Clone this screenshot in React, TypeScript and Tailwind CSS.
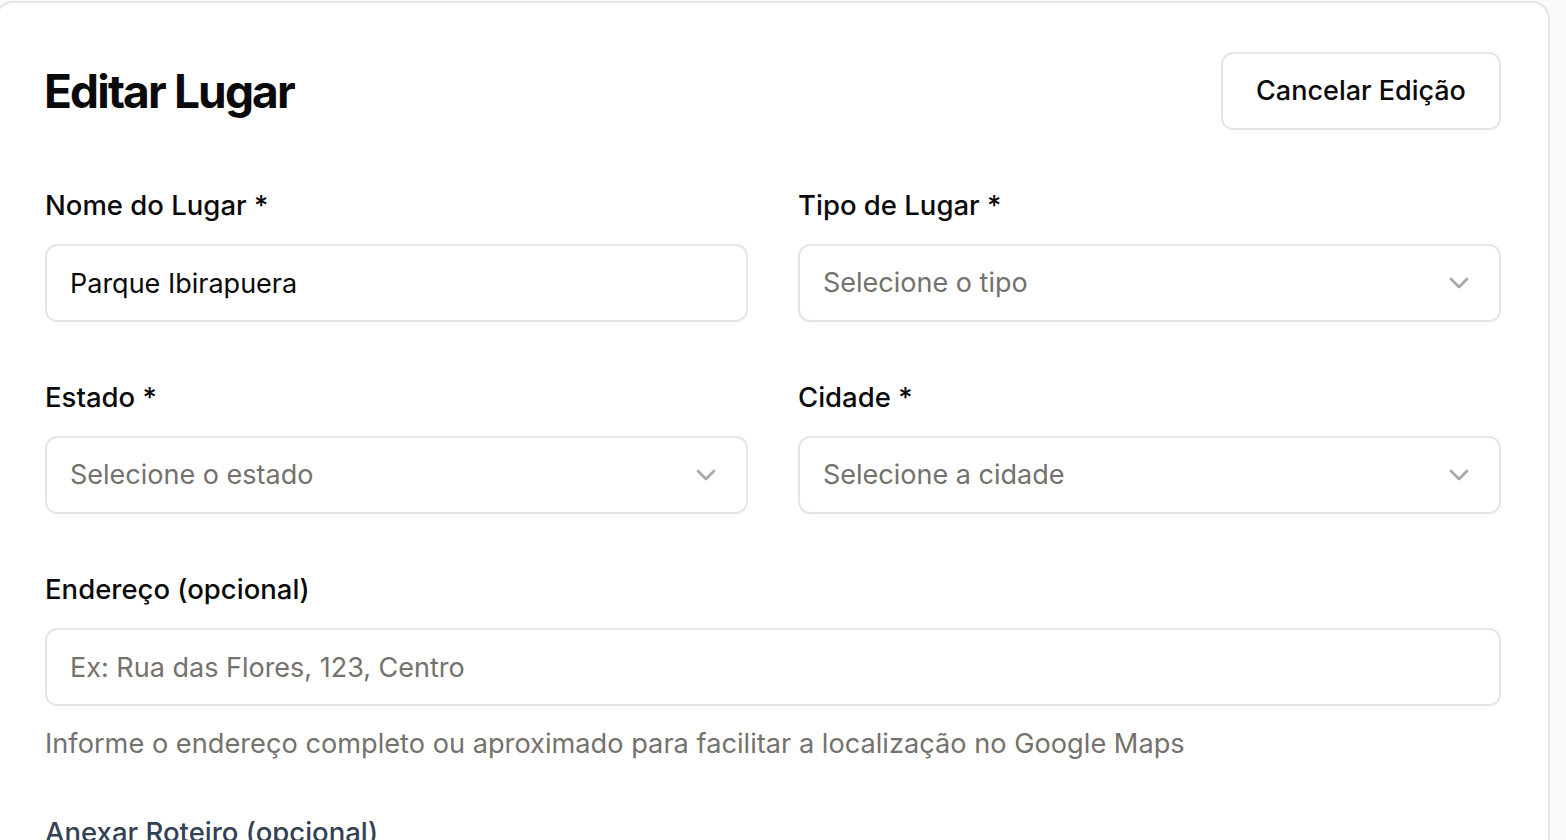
import { ChevronDown } from "lucide-react";

function Field({ label, children }: { label: string; children: React.ReactNode }) {
  return (
    <div className="flex flex-col gap-[19px]">
      <label className="text-[27.5px] leading-[40px] font-medium text-[#0a0a0a]">{label}</label>
      {children}
    </div>
  );
}

function SelectBox({ placeholder }: { placeholder: string }) {
  return (
    <button
      type="button"
      className="flex h-[78px] w-full items-center justify-between rounded-[12px] border-2 border-[#e5e5e5] bg-white pl-[23px] pr-[24px] text-left text-[27px] text-[#75716d]"
    >
      <span>{placeholder}</span>
      <ChevronDown className="h-8 w-8 text-[#a8a8a8]" strokeWidth={2} />
    </button>
  );
}

export default function App() {
  return (
    <div className="min-h-screen overflow-hidden bg-[#f9fafb] font-['Inter','Noto_Sans',sans-serif]">
      <div className="-ml-[5px] mt-px w-[1555px] rounded-[18px] border-2 border-[#e5e5e5] bg-white pl-[48px] pr-[47px] pt-[49px] pb-[80px]">
        <div className="flex items-center justify-between">
          <h1 className="-ml-px text-[46px] leading-[56px] font-bold tracking-[-0.04em] text-[#0a0a0a]">Editar Lugar</h1>
          <button
            type="button"
            className="h-[78px] w-[280px] rounded-[12px] border-2 border-[#e5e5e5] bg-white text-[27px] font-medium text-[#0a0a0a]"
          >
            Cancelar Edição
          </button>
        </div>

        <div className="mt-[55px] grid grid-cols-2 gap-x-[50px] gap-y-[55px]">
          <Field label="Nome do Lugar *">
            <input
              defaultValue="Parque Ibirapuera"
              className="h-[78px] w-full rounded-[12px] border-2 border-[#e5e5e5] bg-white px-[23px] text-[27px] text-[#0a0a0a] outline-none"
            />
          </Field>
          <Field label="Tipo de Lugar *">
            <SelectBox placeholder="Selecione o tipo" />
          </Field>
          <Field label="Estado *">
            <SelectBox placeholder="Selecione o estado" />
          </Field>
          <Field label="Cidade *">
            <SelectBox placeholder="Selecione a cidade" />
          </Field>
          <div className="col-span-2 flex flex-col">
            <Field label="Endereço (opcional)">
              <input
                placeholder="Ex: Rua das Flores, 123, Centro"
                className="h-[78px] w-full rounded-[12px] border-2 border-[#e5e5e5] bg-white px-[23px] text-[27px] text-[#0a0a0a] outline-none placeholder:text-[#75716d]"
              />
            </Field>
            <p className="mt-[18px] text-[27.2px] leading-[40px] text-[#75716d]">
              Informe o endereço completo ou aproximado para facilitar a localização no Google Maps
            </p>
          </div>
        </div>

        <div className="mt-[48px] flex flex-col gap-[19px]">
          <label className="text-[27.5px] leading-[40px] font-medium text-[#334155]">Anexar Roteiro (opcional)</label>
          <div className="h-[160px] rounded-[12px] border-2 border-dashed border-[#e5e5e5]" />
        </div>
      </div>
    </div>
  );
}
